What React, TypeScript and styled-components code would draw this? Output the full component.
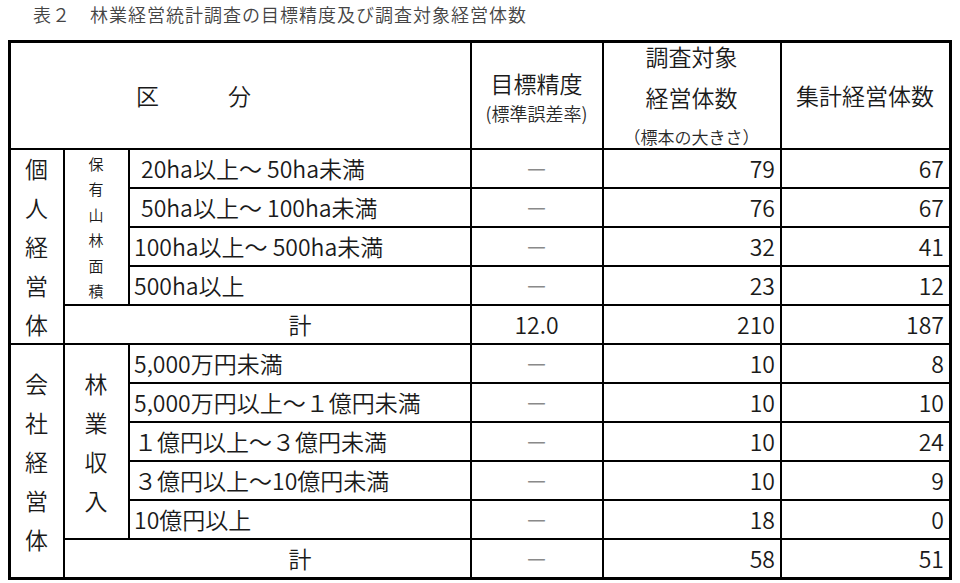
import React from "react";
import styled, { createGlobalStyle } from "styled-components";

const GlobalStyle = createGlobalStyle`
  html, body {
    margin: 0;
    padding: 0;
    background: #fff;
  }
  body {
    font-family: "Noto Sans CJK JP", "Noto Sans", sans-serif;
    font-weight: 350;
    color: #1a1a1a;
  }
`;

const Page = styled.div`
  padding-left: 8px;
`;

const Title = styled.div`
  height: 40px;
  line-height: 28px;
  padding-left: 25px;
  font-size: 18px;
  letter-spacing: 1px;
  color: #444;
  white-space: pre;
`;

const Grid = styled.div`
  display: grid;
  grid-template-columns: 52px 63px 340px 130px 176px 167px;
  grid-template-rows: 105px repeat(11, 37px);
  gap: 2px;
  width: max-content;
  background: #000;
  border: 3px solid #000;
`;

type Align = "left" | "center" | "right";

const Cell = styled.div<{ $col: string; $row: string; $align?: Align; $indent?: number }>`
  grid-column: ${({ $col }) => $col};
  grid-row: ${({ $row }) => $row};
  background: #fff;
  display: flex;
  align-items: center;
  justify-content: ${({ $align }) =>
    $align === "left" ? "flex-start" : $align === "right" ? "flex-end" : "center"};
  padding: 0 5px 0 ${({ $indent }) => 4 + ($indent ?? 0)}px;
  font-size: 23px;
  line-height: 37px;
  white-space: pre;
`;

const HeadStack = styled.div`
  display: flex;
  flex-direction: column;
  align-items: center;
`;

const HeadLine = styled.span<{ $h: number }>`
  font-size: 23px;
  line-height: ${({ $h }) => $h}px;
`;

const HeadNote = styled.span<{ $h: number; $size: number }>`
  font-size: ${({ $size }) => $size}px;
  line-height: ${({ $h }) => $h}px;
  color: #2a2a2a;
`;

const SectionHead = styled.span`
  padding-left: 121px;
  letter-spacing: 69px;
  margin-right: auto;
`;

const VerticalText = styled.div<{ $pitch: number; $size: number }>`
  display: flex;
  flex-direction: column;
  align-items: center;
  font-size: ${({ $size }) => $size}px;
  line-height: ${({ $pitch }) => $pitch}px;
`;

const Dash = styled.span`
  color: #8a8a8a;
`;

const TotalLabel = styled.span`
  padding-left: 66px;
`;

type Row = { label: string; indent?: number; target: string; sample: string; total: string };

const individual: Row[] = [
  { label: "20ha以上～ 50ha未満", indent: 7, target: "－", sample: "79", total: "67" },
  { label: "50ha以上～ 100ha未満", indent: 7, target: "－", sample: "76", total: "67" },
  { label: "100ha以上～ 500ha未満", target: "－", sample: "32", total: "41" },
  { label: "500ha以上", target: "－", sample: "23", total: "12" },
];

const corporate: Row[] = [
  { label: "5,000万円未満", target: "－", sample: "10", total: "8" },
  { label: "5,000万円以上～１億円未満", target: "－", sample: "10", total: "10" },
  { label: "１億円以上～３億円未満", target: "－", sample: "10", total: "24" },
  { label: "３億円以上～10億円未満", target: "－", sample: "10", total: "9" },
  { label: "10億円以上", target: "－", sample: "18", total: "0" },
];

const Vertical: React.FC<{ text: string; pitch: number; size: number }> = ({ text, pitch, size }) => (
  <VerticalText $pitch={pitch} $size={size}>
    {text.split("").map((c, i) => (
      <span key={i}>{c}</span>
    ))}
  </VerticalText>
);

const Target: React.FC<{ value: string }> = ({ value }) =>
  value === "－" ? <Dash>－</Dash> : <>{value}</>;

const DataRows: React.FC<{ rows: Row[]; start: number }> = ({ rows, start }) => (
  <>
    {rows.map((r, i) => {
      const row = String(start + i);
      return (
        <React.Fragment key={row}>
          <Cell $col="3" $row={row} $align="left" $indent={r.indent}>
            {r.label}
          </Cell>
          <Cell $col="4" $row={row}>
            <Target value={r.target} />
          </Cell>
          <Cell $col="5" $row={row} $align="right">
            {r.sample}
          </Cell>
          <Cell $col="6" $row={row} $align="right">
            {r.total}
          </Cell>
        </React.Fragment>
      );
    })}
  </>
);

const TotalRow: React.FC<{ row: number; target: string; sample: string; total: string }> = ({
  row,
  target,
  sample,
  total,
}) => (
  <>
    <Cell $col="2 / 4" $row={String(row)}>
      <TotalLabel>計</TotalLabel>
    </Cell>
    <Cell $col="4" $row={String(row)}>
      <Target value={target} />
    </Cell>
    <Cell $col="5" $row={String(row)} $align="right">
      {sample}
    </Cell>
    <Cell $col="6" $row={String(row)} $align="right">
      {total}
    </Cell>
  </>
);

export default function App() {
  return (
    <Page>
      <GlobalStyle />
      <Title>表２　林業経営統計調査の目標精度及び調査対象経営体数</Title>
      <Grid>
        <Cell $col="1 / 4" $row="1" $align="left">
          <SectionHead>区分</SectionHead>
        </Cell>
        <Cell $col="4" $row="1">
          <HeadStack>
            <HeadLine $h={35}>目標精度</HeadLine>
            <HeadNote $h={25} $size={18}>(標準誤差率)</HeadNote>
          </HeadStack>
        </Cell>
        <Cell $col="5" $row="1">
          <HeadStack>
            <HeadLine $h={41}>調査対象</HeadLine>
            <HeadLine $h={41}>経営体数</HeadLine>
            <HeadNote $h={37} $size={17}>（標本の大きさ）</HeadNote>
          </HeadStack>
        </Cell>
        <Cell $col="6" $row="1">
          <HeadLine $h={37}>集計経営体数</HeadLine>
        </Cell>

        <Cell $col="1" $row="2 / 7">
          <Vertical text="個人経営体" pitch={39} size={23} />
        </Cell>
        <Cell $col="2" $row="2 / 6">
          <Vertical text="保有山林面積" pitch={25.5} size={15} />
        </Cell>
        <DataRows rows={individual} start={2} />
        <TotalRow row={6} target="12.0" sample="210" total="187" />

        <Cell $col="1" $row="7 / 13">
          <Vertical text="会社経営体" pitch={39} size={23} />
        </Cell>
        <Cell $col="2" $row="7 / 12">
          <Vertical text="林業収入" pitch={39} size={23} />
        </Cell>
        <DataRows rows={corporate} start={7} />
        <TotalRow row={12} target="－" sample="58" total="51" />
      </Grid>
    </Page>
  );
}
